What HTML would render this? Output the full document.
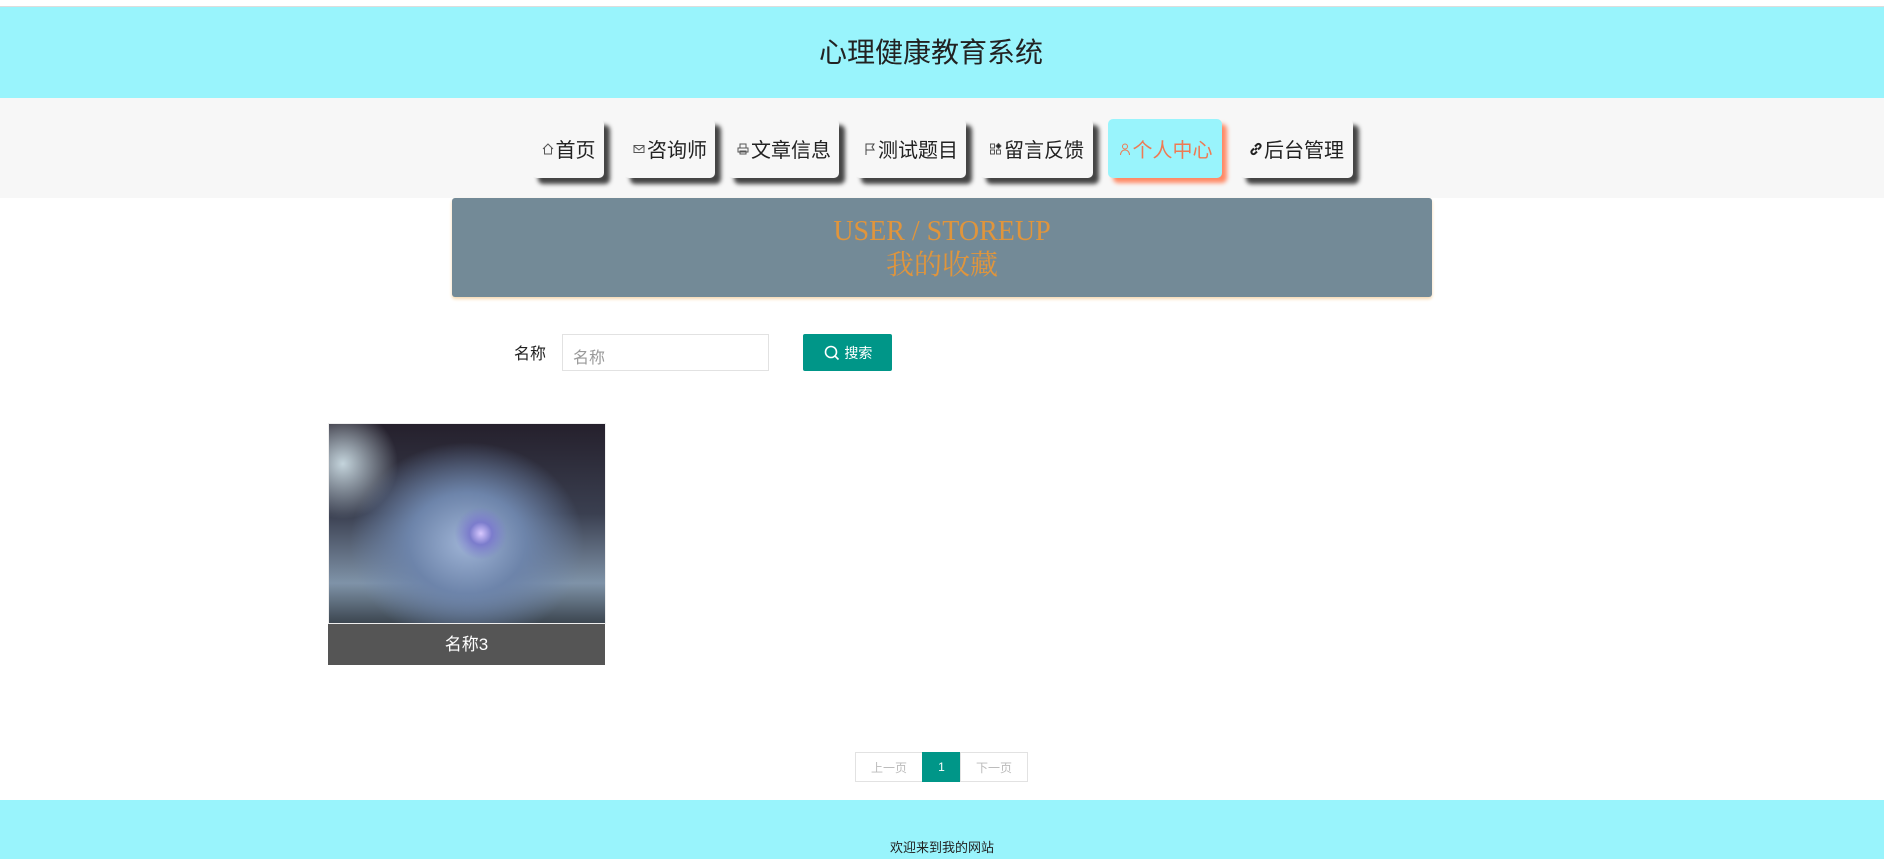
<!DOCTYPE html>
<html><head><meta charset="utf-8"><style>
*{margin:0;padding:0;box-sizing:border-box}
body{width:1884px;height:859px;overflow:hidden;background:#fff;font-family:"Liberation Sans","Noto Sans CJK SC",sans-serif;position:relative}
.abs{position:absolute}
.top{left:0;top:0;width:1884px;height:7px;background:#fff;border-bottom:1px solid #ddd}
.hdr{left:0;top:7px;width:1884px;height:91px;background:#99f4fc;text-align:center;line-height:91px;font-size:28px;color:#222;padding-right:22px}
.nav{left:0;top:98px;width:1884px;height:100px;background:#f7f7f7}
.btn{top:119px;height:59px;background:#f7f7f7;border-radius:5px;box-shadow:6px 6px 4px #444;font-size:20px;color:#222;display:flex;align-items:center;justify-content:center;white-space:nowrap}
.btn svg{width:14px;height:14px;margin-right:1px}
.act{background:#99f4fc;color:#ee7a54;box-shadow:5px 5px 4px #ff8a66}
.ban{left:452px;top:198px;width:980px;height:99px;background:#738a97;border-radius:3px;box-shadow:0 2px 3px #f5d8b0;text-align:center;color:#e0953c;font-family:"Liberation Serif","Noto Serif CJK SC",serif;font-size:28px;line-height:34px;padding-top:17px}
.lbl{left:514px;top:340px;font-size:16px;color:#222}
.inp{left:562px;top:334px;width:207px;height:37px;border:1px solid #e2e2e2;font-size:16px;color:#999;padding:9px 10px}
.sb{left:803px;top:334px;width:89px;height:37px;background:#009688;border-radius:2px;color:#fff;font-size:14px;display:flex;align-items:center;justify-content:center}
.img{left:328px;top:423px;width:278px;height:201px;background:radial-gradient(circle at 55% 55%,#d8c8ff 0,#7b7ccc 6%,transparent 14%),radial-gradient(ellipse at 50% 60%,#9fb4d6 0,#6d84aa 30%,transparent 60%),radial-gradient(circle at 5% 20%,#c4d4dc 0,transparent 18%),linear-gradient(180deg,#25202c 0,#3a3f50 45%,#7f93a8 80%,#3c4650 100%);border:1px solid #eee}
.cap{left:328px;top:624px;width:277px;height:41px;background:#555;color:#fff;font-size:17px;text-align:center;line-height:41px}
.pg{top:752px;height:30px;border:1px solid #e2e2e2;font-size:12px;color:#bbb;display:flex;align-items:center;justify-content:center}
.ftr{left:0;top:800px;width:1884px;height:59px;background:#99f4fc;text-align:center;font-size:13px;color:#222;padding-top:37px}
</style></head><body>
<div class="abs top"></div>
<div class="abs hdr">心理健康教育系统</div>
<div class="abs nav"></div>
<div class="abs btn" style="left:532px;width:72px"><svg viewBox="0 0 14 14" fill="none" stroke="#555"><path d="M2 7L7 2l5 5M3.5 6v6h7V6"/></svg>首页</div>
<div class="abs btn" style="left:624px;width:91px"><svg viewBox="0 0 14 14" fill="none" stroke="#555"><rect x="2" y="3.5" width="10" height="7"/><path d="M2 4l5 4 5-4"/></svg>咨询师</div>
<div class="abs btn" style="left:728px;width:111px"><svg viewBox="0 0 14 14" fill="none" stroke="#555"><rect x="4" y="2" width="6" height="4"/><rect x="2" y="6" width="10" height="4"/><rect x="4" y="9" width="6" height="3"/></svg>文章信息</div>
<div class="abs btn" style="left:855px;width:111px"><svg viewBox="0 0 14 14" fill="none" stroke="#444"><path d="M3 13V2h8l-2 3 2 3H3"/></svg>测试题目</div>
<div class="abs btn" style="left:980px;width:113px"><svg viewBox="0 0 14 14" fill="none" stroke="#555"><rect x="1.5" y="2" width="4" height="4"/><rect x="1.5" y="8" width="4" height="4"/><rect x="7.5" y="8" width="4" height="4"/><path d="M9.5 1.5l2.5 2.5-2.5 2.5L7 4z" fill="#222"/></svg>留言反馈</div>
<div class="abs btn act" style="left:1108px;width:114px"><svg viewBox="0 0 14 14" fill="none" stroke="#ee7a54"><circle cx="7" cy="4.5" r="2.5"/><path d="M2.5 13c0-3 2-5 4.5-5s4.5 2 4.5 5"/></svg>个人中心</div>
<div class="abs btn" style="left:1240px;width:113px"><svg viewBox="0 0 14 14" fill="none" stroke="#222" stroke-width="2"><path d="M6 8l2-2M5 6.5L3 8.5a2 2 0 003 3l2-2M9 7.5l2-2a2 2 0 00-3-3l-2 2"/></svg>后台管理</div>
<div class="abs ban">USER / STOREUP<br>我的收藏</div>
<div class="abs lbl">名称</div>
<div class="abs inp">名称</div>
<div class="abs sb"><svg width="18" height="18" viewBox="0 0 18 18" fill="none" stroke="#fff" stroke-width="1.6"><circle cx="8" cy="8" r="5.5"/><path d="M12 12l3.5 3.5"/></svg>&nbsp;搜索</div>
<div class="abs img"></div>
<div class="abs cap">名称3</div>
<div class="abs pg" style="left:855px;width:68px">上一页</div>
<div class="abs pg" style="left:922px;width:39px;background:#009688;color:#fff;border-color:#009688">1</div>
<div class="abs pg" style="left:960px;width:68px">下一页</div>
<div class="abs ftr">欢迎来到我的网站</div>
</body></html>
